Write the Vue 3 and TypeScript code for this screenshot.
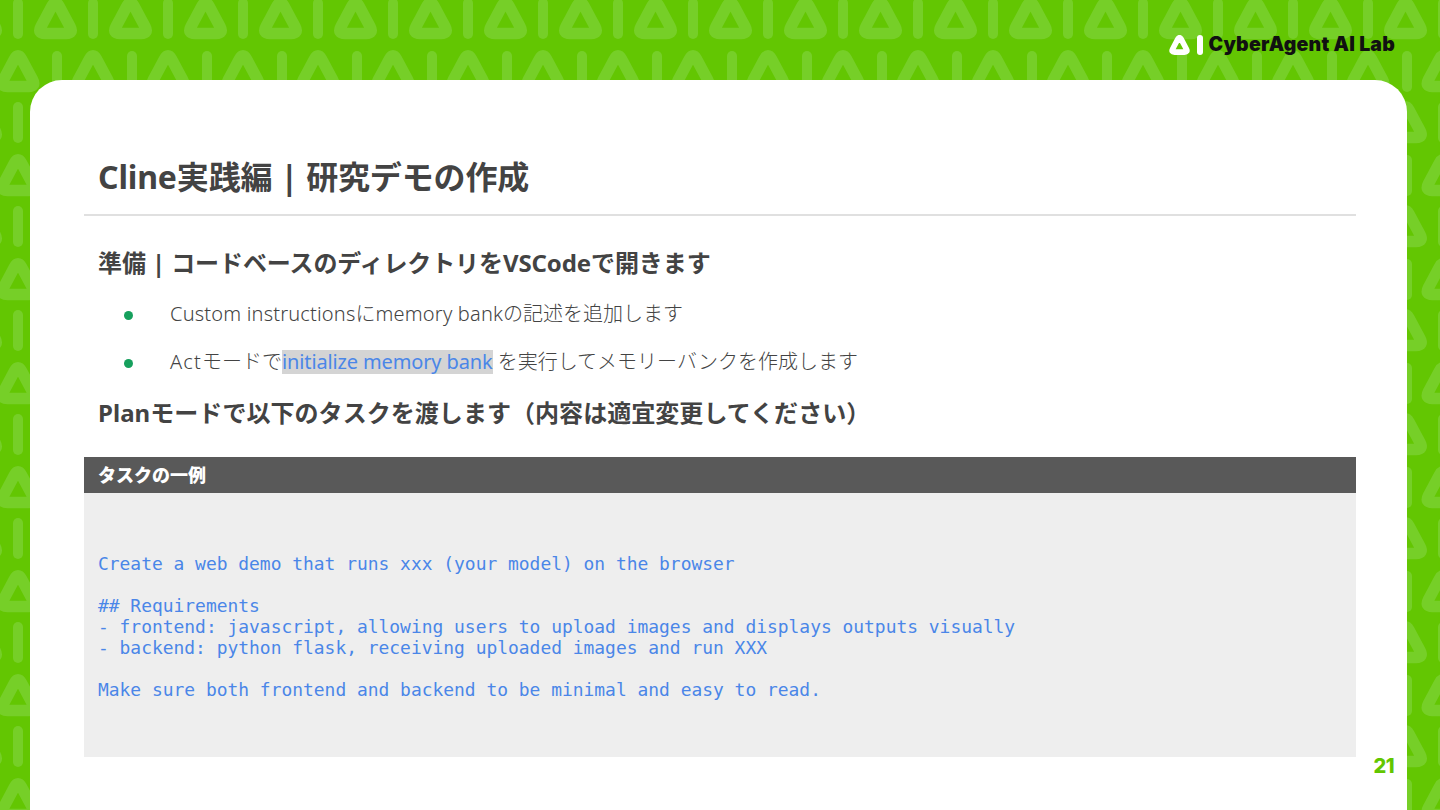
<script setup lang="ts">
const triangle = 'M-3.5 10Q0 3.5 3.5 10L14.6 30.8Q18.2 37.6 10.5 37.6H-10.5Q-18.2 37.6 -14.6 30.8Z'

interface Seg { t: string; cls?: string }
const bullets: Seg[][] = [
  [
    { t: 'Custom instructions', cls: 'lat' },
    { t: 'に' },
    { t: 'memory bank', cls: 'lat' },
    { t: 'の記述を追加します' },
  ],
  [
    { t: 'Act', cls: 'wide' },
    { t: 'モードで' },
    { t: 'initialize memory bank', cls: 'hl' },
    { t: ' を実行してメモリーバンクを作成します' },
  ],
]
const codeLines = [
  'Create a web demo that runs xxx (your model) on the browser',
  '',
  '## Requirements',
  '- frontend: javascript, allowing users to upload images and displays outputs visually',
  '- backend: python flask, receiving uploaded images and run XXX',
  '',
  'Make sure both frontend and backend to be minimal and easy to read.',
]

const PERIOD_X = 75
const PERIOD_Y = 104
const triangles: { x: number; y: number }[] = []
const bars: { x: number; y: number }[] = []
for (let r = 0; r < 8; r++) {
  const top = r * PERIOD_Y
  for (let c = -1; c < 21; c++) {
    triangles.push({ x: 55.5 + c * PERIOD_X, y: top - 4 })
    bars.push({ x: 18 + c * PERIOD_X, y: top - 2 })
    triangles.push({ x: 18 + c * PERIOD_X, y: top + 49 })
    bars.push({ x: 57 + c * PERIOD_X, y: top + 51 })
  }
}
</script>

<template>
  <div class="slide">
    <svg class="backdrop" width="1440" height="810" viewBox="0 0 1440 810" aria-hidden="true">
      <rect width="1440" height="810" fill="#63c602" />
      <g fill="none" stroke="#76cf28" stroke-linecap="round" stroke-linejoin="round">
        <path v-for="(p, i) in triangles" :key="'t' + i" :d="triangle" :transform="`translate(${p.x} ${p.y})`" stroke-width="11.5" />
        <path v-for="(p, i) in bars" :key="'b' + i" :d="`M${p.x} ${p.y + 5}V${p.y + 36}`" stroke-width="10" />
      </g>
    </svg>
    <div class="frame">
      <header class="top">
        <svg class="mark" width="34" height="20" viewBox="0 0 34 20" aria-hidden="true">
          <g fill="none" stroke="#fff" stroke-linecap="round" stroke-linejoin="round">
            <path :d="triangle" transform="translate(10.5 -0.5) scale(0.47)" stroke-width="12" />
            <path d="M31 3V17" stroke-width="6" />
          </g>
        </svg>
        <span class="brand">CyberAgent AI Lab</span>
      </header>
      <main class="card">
        <h1 class="title">Cline実践編 | 研究デモの作成</h1>
        <div class="rule"></div>
        <h2 class="lead first">準備 | コードベースのディレクトリをVSCodeで開きます</h2>
        <ul class="list">
          <li v-for="(b, i) in bullets" :key="i">
            <span class="dot"></span>
            <span class="item"><span v-for="(s, j) in b" :key="j" :class="s.cls">{{ s.t }}</span></span>
          </li>
        </ul>
        <h2 class="lead second">Planモードで以下のタスクを渡します（内容は適宜変更してください）</h2>
        <div class="box-head">タスクの一例</div>
        <div class="box-body">
          <div v-for="(l, i) in codeLines" :key="i" class="code-line">{{ l }}</div>
        </div>
        <div class="page">21</div>
      </main>
    </div>
  </div>
</template>

<style scoped>
.slide {
  width: 1440px;
  height: 810px;
  display: grid;
  overflow: hidden;
  font-family: "Noto Sans", "Noto Sans CJK JP", sans-serif;
  color: #434343;
}
.backdrop,
.frame {
  grid-area: 1 / 1;
}
.backdrop {
  display: block;
}
.frame {
  display: flex;
  flex-direction: column;
  padding: 0 33px 0 30px;
}
.top {
  height: 80px;
  display: flex;
  align-items: flex-start;
  justify-content: flex-end;
  gap: 6px;
  padding: 33px 12px 0 0;
  box-sizing: border-box;
}
.mark {
  display: block;
  margin-top: 2px;
}
.brand {
  font-family: Inter, sans-serif;
  font-weight: 900;
  font-size: 19.5px;
  line-height: 22px;
  color: #111;
  letter-spacing: 0.2px;
  white-space: nowrap;
}
.card {
  flex: 1;
  background: #fff;
  border-radius: 32px 32px 0 0;
  padding: 72px 51px 0 54px;
  display: flex;
  flex-direction: column;
}
.title {
  margin: 0 0 0 14px;
  font-size: 32px;
  line-height: 50px;
  font-weight: 700;
  letter-spacing: -0.15px;
}
.rule {
  height: 2px;
  background: #e0e0e0;
  margin-top: 12px;
}
.lead {
  margin: 27px 0 0 14px;
  font-size: 24px;
  line-height: 40px;
  font-weight: 700;
}
.lead.first {
  letter-spacing: -0.1px;
}
.lead.second {
  margin-top: 9px;
  letter-spacing: 0.05px;
}
.list {
  list-style: none;
  margin: 5px 0 0;
  padding: 0;
}
.list li {
  display: flex;
  align-items: center;
  height: 48px;
  font-size: 20px;
  font-weight: 300;
  color: #434343;
  padding-left: 40px;
}
.dot {
  width: 9px;
  height: 9px;
  border-radius: 50%;
  background: #16a05d;
  margin: 6px 37px 0 0;
  flex: none;
}
.item {
  white-space: pre;
}
.lat {
  letter-spacing: 0.18px;
}
.wide {
  letter-spacing: 1.2px;
}
.hl {
  display: inline-block;
  height: 24px;
  line-height: 24px;
  background: #d4d4d4;
  color: #4a86e8;
  font-weight: 400;
  letter-spacing: -0.14px;
}
.box-head {
  margin-top: 24px;
  height: 36px;
  line-height: 36px;
  background: #595959;
  color: #fff;
  font-weight: 800;
  font-size: 18px;
  padding-left: 14px;
}
.box-body {
  height: 264px;
  box-sizing: border-box;
  padding: 59.5px 14px 0;
  background: #eeeeee;
}
.code-line {
  height: 21px;
  line-height: 21px;
  font-family: "DejaVu Sans Mono", monospace;
  font-size: 17.93px;
  color: #4a86e8;
  white-space: pre;
}
.page {
  align-self: flex-end;
  margin: -1px -38px 0 0;
  font-family: Inter, sans-serif;
  font-size: 20px;
  font-weight: 800;
  color: #62c600;
  line-height: 20px;
  letter-spacing: -0.5px;
}
</style>
